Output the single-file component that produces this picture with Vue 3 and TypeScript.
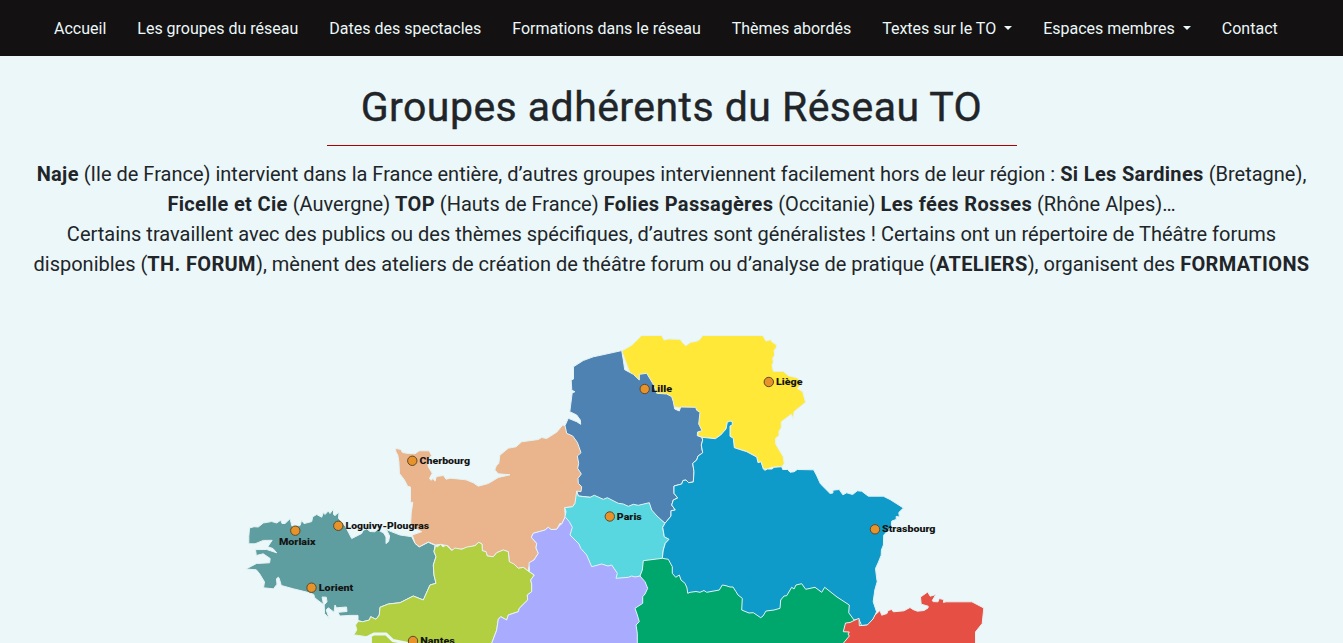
<script setup lang="ts">
interface NavItem { label: string; menu?: boolean }
interface Region { name: string; color: string; points: string }
interface City { name: string; x: number; y: number; tx: number; ty: number; w: number }

const nav: NavItem[] = [
  { label: 'Accueil' },
  { label: 'Les groupes du réseau' },
  { label: 'Dates des spectacles' },
  { label: 'Formations dans le réseau' },
  { label: 'Thèmes abordés' },
  { label: 'Textes sur le TO', menu: true },
  { label: 'Espaces membres', menu: true },
  { label: 'Contact' },
]

const regions: Region[] = [
  { name: 'wallonie', color: '#ffe838', points: '621.7,351 632,345 641.7,335.5 661.7,335.5 664,340 668.3,339 680,339.3 683,343 685.7,345.7 690.7,342.3 696.7,341.3 700,339.3 702.7,335.5 762.7,335.5 766,341 770.7,339.7 772,342 776.7,345 776,348.3 774,350.3 774.7,355 772.7,358.3 773.3,362.3 772,365 773.3,371.3 783.3,371.3 788.3,375.7 796.7,377.7 800.7,381 800,386 797.3,388.3 802.7,391.7 805.6,402.3 794,411.7 793.3,419 791.3,414.3 781.3,421.7 781.3,427.7 779,431 779,435.7 775.5,438.3 775.8,444.3 783.2,456.7 784.2,463.3 782,466.8 772,467.3 767.3,469 763.3,469 761,461.7 758,462.7 756.7,457 746.7,451.7 734.3,447.7 733.3,438.3 730,436.3 730,426 732.3,421.7 727.3,422.3 726,429 720.7,435 715.3,438.7 702,437.3 697.7,435.7 698,432.3 690,410 640,400' },
  { name: 'bretagne', color: '#5f9ea0', points: '249.5,528 254,526.7 258.3,527 263.3,523 271.7,521.5 276.7,523 280.7,520.2 282,523.5 285,523.5 290,518.8 291,522.5 292,526.3 300,525.6 301.7,520.2 304,523.6 311.7,521.6 312.7,516.8 316.7,514.5 321.7,517.2 323.3,512.6 325,514.5 328.3,511 330,513.5 333.5,509 333.5,514.5 335,515.6 339,512 338.5,518.5 340.4,520.4 345.4,526.4 351.7,538.5 361.7,533.5 363,530.5 366.7,528.8 370,531.5 375,531.8 377.3,529.5 383.6,533 386,537 386,543.6 388.6,541.5 389.6,536 386.4,529.6 391.7,531.8 400,535 411.7,536.7 415,543.3 419,547 428.3,542.3 435,545.3 434,551.7 436,556.7 433.3,565 434,575 436,583.3 430,585 423.3,600 413.3,596 400,602.7 388.3,604 380,607.3 379.3,615 376,619.3 370.7,616.7 369.3,620 362.7,621.9 358,620.4 358,615.4 350,615.4 339.8,616 338,612.3 347,611.5 346.5,607 336.5,607.8 335,605 334,612.2 328.3,607.8 326.2,610 329.2,618.4 324.6,613.6 324.2,605 327,601.7 326.3,597.2 322.1,597 323.5,604.6 318,600.4 314.7,597.7 313.7,594.4 306.7,592.1 293.3,588.8 281.3,585.5 279.2,578.3 278.3,577.2 276.4,578.8 277,584.2 273.5,588.8 263.5,587.8 264.5,581.9 259.5,573.6 256.3,569.8 246,569 256.5,563.5 269.6,562.8 270.2,558.5 263.2,553.8 256.3,555.5 255.5,549.6 266.7,549.5 276.7,552.8 273,548.6 267.8,546.7 272.2,540.3 263.3,540.4 255,543.8 248.8,543.8 248.8,536.7' },
  { name: 'normandie', color: '#eab48c', points: '395.5,448.2 401,449.6 402.4,452.5 408.3,453.5 415,453.8 419.3,450.8 429.2,450.8 431.6,455.7 427.8,459.5 428.2,466.5 432.2,473.3 429.5,478.3 430.9,480.3 433,478.5 435,481.2 436.4,476.5 443.5,475.5 446,479.2 450.7,478.2 466,479.8 473.3,482.8 478.3,486.2 488.3,483.5 498.3,477.5 510,474.8 498.3,473.8 494.8,470 496.2,466 498.8,463.3 499.8,455.3 508.3,448.2 516,446.8 521.7,441.8 538.3,439.5 541.7,437.5 546.7,438.5 556.7,432.2 562.7,425 580,430 590,500 575,503.3 572.7,506.7 564.7,507.7 565.3,516.7 561.7,524 560,523.3 556.7,529.3 551,529.5 548.3,527.3 545,530 533.3,533.3 531.3,537.3 536.7,543.3 536,548 538.3,553.3 534,560 530,562.7 527.7,571.7 529,571.7 523.3,567.3 518.3,568.3 509.3,561.7 508.3,551.7 503.3,550 496.7,552.7 493.3,556.7 487.3,556 486,551.7 482.3,550.7 482,544 478.7,542.3 475,545.7 461.7,549 451.7,550 448.3,546 440.7,544.3 435.7,545 428.3,542 419.3,546.7 415,543.3 412.3,535 421.7,531.7 416.7,529.3 410.6,526 411.2,513.3 412.8,502.2 410.5,502.5 410.5,487 407.7,486.3 404.6,480.2 399.5,473.5 398.9,461.7 397.8,455 396,452' },
  { name: 'pays-de-la-loire', color: '#b2cf41', points: '435.7,545 437,547 440.7,544.3 443,547 446,545 448.3,547 451.7,550.5 455,548 461.7,549.3 467,547 475,545.7 478.7,542.3 482,544 482.3,550.7 486,551.7 487.3,556 493.3,556.7 496.7,552.7 503.3,550 508.3,551.7 509.3,561.7 514,564 518.3,568.3 523.3,567.3 529,571.7 534.3,575 530.7,580 531.7,584 531.7,591.7 527.3,595 527.7,600 519.3,608.3 518.3,611.7 508.3,615 506.7,620 500.7,616.7 498.3,619.3 496.7,630 490.7,646 371.5,646 371.5,637 366.7,636.7 353.8,634.8 356.8,630 355.5,625 358.3,621.2 362.7,621.7 369.3,620 370.7,616.7 376,619.3 379.3,615 380,607.3 388.3,604 400,602.7 413.3,596 423.3,600 430,585 436,583.3 434,575 433.3,565 436,556.7 434,551.7' },
  { name: 'centre', color: '#a9abff', points: '565.3,516.7 561.7,524 560,525 556.7,529.3 551,529.5 548.3,527.3 545,530 533.3,533.3 531.3,537.3 536.7,543.3 536,548 538.3,553.3 534,560 529,562.7 529.5,571.7 534.3,575 530.7,580 531.7,584 531.7,591.7 527.3,595 527.7,600 519.3,608.3 518.3,611.7 508.3,615 506.7,620 500.7,616.7 498.3,619.3 496.7,630 490.7,646 650,646 655,570 600,540' },
  { name: 'hauts-de-france', color: '#4d82b3', points: '621.7,350.6 604,354.5 593.3,356.8 583.3,360.5 573.5,366.7 573.5,379 571.2,380.3 571.8,390.3 575,391.7 572.2,392.9 569.8,411.7 576.7,415 580.3,420 580.7,424.3 576.7,421.7 568.3,418.3 565,425.7 566.7,433.3 572.7,436 577.3,442.3 578.3,445 581,452.7 577.3,456 578.7,463.3 577.7,468.3 581.3,474 578,478.3 578.3,483.3 581.7,486.7 581,491.7 576.7,491 578.3,496 590,497.3 603.3,502 625,512 650,512 665,523.3 671,516 671,510.7 675.3,510 671.7,505 673.3,500 677.7,498 674,493.3 674,486 681.7,484 683,480.5 686,480 688.7,482.7 693.3,482 694,471.7 692.7,463.3 696.7,460 698,456 701,454 702.7,452.7 701.3,445 702.7,440 701.7,437.3 697.3,435.7 697.5,432 702,430.7 698.7,424 700,412.3 696.7,410.3 695.7,407.3 680.7,407 679.3,411 674.7,409 673.3,401.7 671.7,396.7 666.7,394 656.7,393.3 653.3,384.3 646.7,373.3 639.3,374.3 639.3,380 633.3,374.3 624.7,369.7 623.3,360' },
  { name: 'ile-de-france', color: '#58d7e0', points: '576.7,491 578.3,496 590,497.3 594.3,495.3 603.3,499.3 607.3,497.7 618.3,503.3 623.3,504 628.3,506.3 633.3,504.3 638.3,505.3 649.3,502.7 651.7,510 657,516 665,523.3 662.7,527.3 664.3,536.7 669,539.3 665.3,543.3 663.3,550 662.3,558.3 650,562 643.3,570 640,576 635,577 631.7,576 628.3,577.3 616,578.3 617.3,573.3 611.7,565 608,566 601.7,564 591.7,566.7 586.7,555 580.7,548.3 579,544 570,535 572.3,527.3 569.3,521.7 565,516.7 566,511.7 564.7,507.7 572.7,506.7 575,503.3' },
  { name: 'grand-est', color: '#0f9bc9', points: '665,523.3 671,516 671,510.7 675.3,510 671.7,505 673.3,500 677.7,498 674,493.3 674,486 681.7,484 683,480.5 686,480 688.7,482.7 693.3,482 694,471.7 692.7,463.3 696.7,460 698,456 701,454 702.7,452.7 701.3,445 702.7,440 702,437.3 715.3,438.7 720.7,435 726,429 727.3,422.3 730,421 732.3,421.7 732.3,425 730,426 730,436.3 733.3,438.3 734.3,447.7 746.7,451.7 756.7,457 758,462.7 761,461.7 763.3,469 765,470.3 767.3,469 772,469 774,467.3 781.7,466.7 782.7,469.5 787.7,469.5 790,472.2 794,471.8 797.3,469.5 813.6,469.8 816.4,475 820.4,483.8 830,493.4 832.9,493 832.9,490.2 839.2,489.5 842.9,494.8 846.7,492.8 852.7,494.5 857.3,490.8 861.7,491.2 868.3,496.2 883.3,496.2 890,499.5 903.4,508 898.8,512.5 899.4,517 896.2,516.4 896.2,519.5 891.8,521 891.2,526.9 883.7,535.2 883.4,545 881.4,550 881.2,555.2 878.4,562.2 875.5,568.5 876.5,577 877.2,581.7 874.8,590 873.2,601.7 876.5,611.7 873.8,618.6 868.3,625 859.3,625.7 845,640 665,600 650,575 662.3,558.3 663.3,550 665.3,543.3 669,539.3 664.3,536.7 662.7,527.3' },
  { name: 'bourgogne', color: '#00a76c', points: '859,619.3 854,620 848.7,612.7 849.3,605 837,597 824.7,587.3 821.7,592.3 815,587.3 805.7,589.3 801.7,583.7 796,585 794,589 791.7,587.3 786.7,595.7 784,596 780.7,600 780,608.3 774,610 766,611 763,616 760.7,617.7 753.3,612.7 749,613 741.7,610 742.3,598.3 738,595 736,591.7 733,587 730,587 726,585.7 722.3,585 719.3,590 706.7,592.3 704,590.5 700,592.3 696,591.5 690,592.3 687.7,593.3 687,588 685,583.3 681,580 679.3,575 675.7,577.3 672.3,573.3 672.3,566.7 668.3,559.3 662.3,558.3 643.3,560.7 642.3,570 640,576 645,581.7 647.7,588.3 645,594 642.7,596.7 642.7,603.3 635,608.3 637.3,615 639.3,621.7 636,625 637.3,633.3 637.3,646 870,646' },
  { name: 'suisse', color: '#e64f43', points: '841,646 849.3,636 848,634 849.3,632 843.3,631.7 845.5,623 850,622.5 854,620.5 859,618.3 859.3,625.7 867.3,625 873,619 875,615 880,610.5 881.7,615.2 887,613.5 888,610.5 891.7,609.5 893.3,611.8 904,610.8 910,607.5 913,609.5 917.3,611.2 924,610.5 928,608 928.2,606.2 921.2,604.2 920.5,597 927.7,592 930.2,596.2 935.8,594.6 932.2,600.7 933.2,601.6 938,601.8 939.2,598.5 943.8,599.6 943.4,602.4 946,601.8 971.9,601.8 983.8,608 982.2,623.5 975.5,631.9 975.5,646' },
]

const cities: City[] = [
  { name: 'Lille', x: 644.7, y: 389, tx: 651.5, ty: 392, w: 20.5 },
  { name: 'Liège', x: 768.8, y: 382, tx: 776, ty: 385, w: 26.5 },
  { name: 'Cherbourg', x: 412.3, y: 460.8, tx: 419.5, ty: 464, w: 50.5 },
  { name: 'Loguivy-Plougras', x: 338.3, y: 525.8, tx: 345.5, ty: 529, w: 83.5 },
  { name: 'Morlaix', x: 295.3, y: 530.7, tx: 279, ty: 545, w: 36.5 },
  { name: 'Lorient', x: 311.5, y: 587.7, tx: 318.8, ty: 590.5, w: 34.5 },
  { name: 'Nantes', x: 413, y: 641, tx: 420.3, ty: 644, w: 34.5 },
  { name: 'Paris', x: 609.8, y: 516.5, tx: 616.8, ty: 520, w: 25 },
  { name: 'Strasbourg', x: 875, y: 529.3, tx: 882, ty: 532, w: 53.5 },
]
</script>

<template>
  <div class="page">
    <nav class="navbar">
      <a v-for="item in nav" :key="item.label" class="nav-link">
        {{ item.label }}<span v-if="item.menu" class="caret"></span>
      </a>
    </nav>
    <main>
      <h1>Groupes adhérents du Réseau TO</h1>
      <div class="rule"></div>
      <p class="intro">
        <span><b>Naje</b> (Ile de France) intervient dans la France entière, d’autres groupes interviennent facilement hors de leur région : <b>Si Les Sardines</b> (Bretagne),</span>
        <span><b>Ficelle et Cie</b> (Auvergne) <b>TOP</b> (Hauts de France) <b>Folies Passagères</b> (Occitanie) <b>Les fées Rosses</b> (Rhône Alpes)…</span>
        <span>Certains travaillent avec des publics ou des thèmes spécifiques, d’autres sont généralistes ! Certains ont un répertoire de Théâtre forums</span>
        <span>disponibles (<b>TH. FORUM</b>), mènent des ateliers de création de théâtre forum ou d’analyse de pratique (<b>ATELIERS</b>), organisent des <b>FORMATIONS</b></span>
      </p>
      <svg class="map" viewBox="0 300 1343 343" width="1343" height="343">
        <polygon v-for="r in regions" :key="r.name" :points="r.points" :fill="r.color" class="region" />
        <path class="estuary" d="M365 638.5 L374 634 L386 634 L393 640.5 L408 643.5" />
        <g v-for="c in cities" :key="c.name">
          <circle :cx="c.x" :cy="c.y" r="4.7" class="dot" />
          <text :x="c.tx" :y="c.ty" :textLength="c.w" lengthAdjust="spacingAndGlyphs" class="city">{{ c.name }}</text>
        </g>
      </svg>
    </main>
  </div>
</template>

<style>
body { margin: 0; background: #ebf7f8; overflow: hidden; }
</style>

<style scoped>
.page {
  width: 1343px;
  height: 643px;
  overflow: hidden;
  background: #ebf7f8;
  color: #212529;
  font-family: Roboto, sans-serif;
}
.navbar {
  display: flex;
  align-items: center;
  gap: 31px;
  height: 56px;
  padding: 1px 0 0 54px;
  box-sizing: border-box;
  background: #141112;
}
.nav-link {
  color: #ebf7f8;
  font-size: 16px;
  line-height: 24px;
  white-space: nowrap;
}
.caret {
  display: inline-block;
  margin-left: 8px;
  vertical-align: 4px;
  border-top: 4.8px solid;
  border-left: 4.8px solid transparent;
  border-right: 4.8px solid transparent;
}
h1 {
  margin: 0;
  padding-top: 26px;
  height: 63px;
  font-size: 41px;
  font-weight: 400;
  letter-spacing: 0.45px;
  -webkit-text-stroke: 0.4px #212529;
  line-height: 50px;
  text-align: center;
}
.rule {
  width: 690px;
  height: 1px;
  margin: 0 auto;
  background: #b00000;
}
.intro {
  height: 141px;
  margin: 0;
  padding-top: 13px;
  font-size: 20px;
  line-height: 30px;
  text-align: center;
}
.intro span { display: block; white-space: nowrap; }
.intro b { font-weight: 700; letter-spacing: 0.34px; }
.map { display: block; }
.region { stroke: #e6f3f4; stroke-width: 1; stroke-linejoin: round; }
.estuary { fill: none; stroke: #ebf7f8; stroke-width: 3; }
.dot { fill: #e8932a; stroke: #5c4a2c; stroke-width: 1; }
.city { font-size: 9.3px; font-weight: 900; fill: #141414; }
</style>
